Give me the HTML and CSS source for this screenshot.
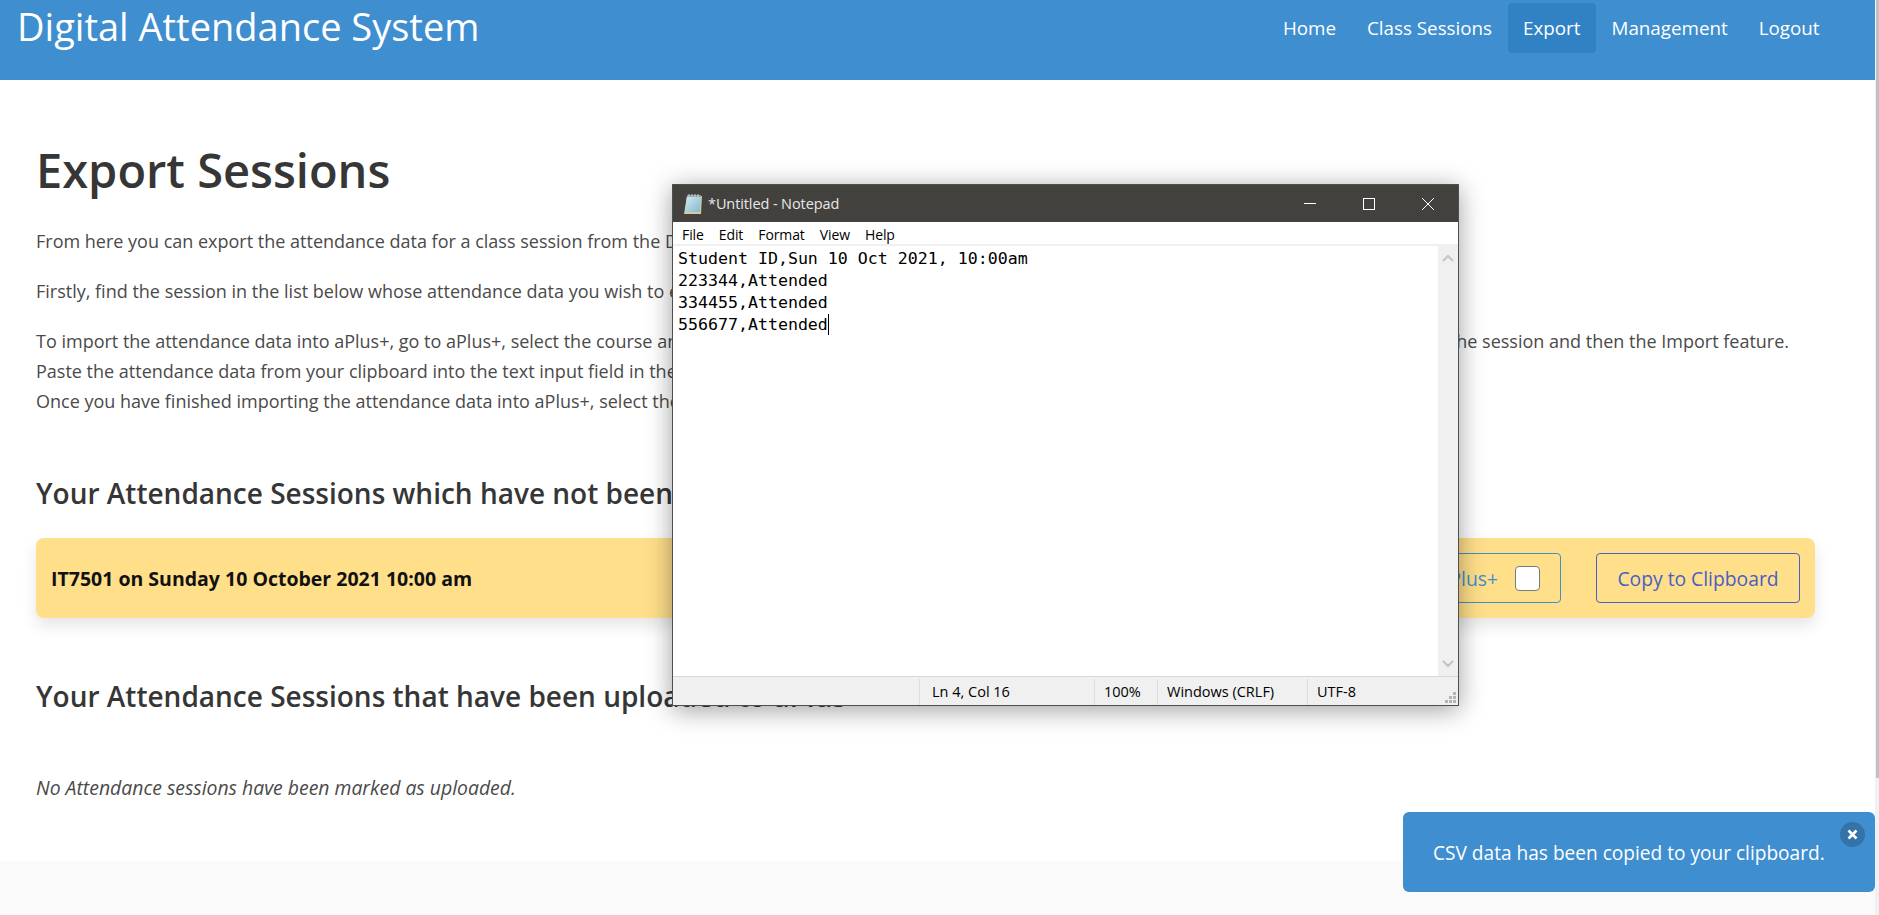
FILE: index.html
```html
<!DOCTYPE html>
<html lang="en">
<head>
<meta charset="utf-8">
<title>Digital Attendance System</title>
<link rel="stylesheet" href="styles.css">
</head>
<body>
<div class="page">
  <nav class="navbar">
    <a class="brand">Digital Attendance System</a>
    <div class="menu">
      <a class="item">Home</a>
      <a class="item">Class Sessions</a>
      <a class="item active">Export</a>
      <a class="item">Management</a>
      <a class="item">Logout</a>
    </div>
  </nav>
  <main class="main">
    <h1 class="title">Export Sessions</h1>
    <p class="para">From here you can export the attendance data for a class session from the Digital Attendance System in a format that can be imported into aPlus+.</p>
    <p class="para">Firstly, find the session in the list below whose attendance data you wish to export and select the Copy to Clipboard button.</p>
    <p class="para">To import the attendance data into aPlus+, go to aPlus+, select the course and open the Attendance tab, select the class session in the list on that page, and then choose the session and then the Import feature.<br>Paste the attendance data from your clipboard into the text input field in the Import feature, and then follow the instructions shown there.<br>Once you have finished importing the attendance data into aPlus+, select the Mark as Uploaded checkbox for the session in the list below.</p>
    <h2 class="subtitle first">Your Attendance Sessions which have not been uploaded to aPlus+</h2>
    <div class="session">
      <span class="session-name">IT7501 on Sunday 10 October 2021 10:00 am</span>
      <div class="actions">
        <label class="btn btn-info">Marked as uploaded to aPlus+ <span class="check"></span></label>
        <button class="btn btn-link">Copy to Clipboard</button>
      </div>
    </div>
    <h2 class="subtitle second">Your Attendance Sessions that have been uploaded to aPlus+</h2>
    <p class="none">No Attendance sessions have been marked as uploaded.</p>
  </main>
  <footer class="footer"></footer>
</div>
<div class="scrollbar"><div class="thumb"></div></div>

<section class="notepad">
  <header class="np-title">
    <svg class="np-icon" viewBox="0 0 20 22" width="20" height="22">
      <defs>
        <linearGradient id="paper" x1="0" y1="0" x2="1" y2="1">
          <stop offset="0" stop-color="#d4ecf2"/>
          <stop offset="1" stop-color="#7fb9cc"/>
        </linearGradient>
      </defs>
      <path d="M4 3h15l-1 18H1z" fill="#d8c9a4"/>
      <path d="M4 3h14l-1 16H2z" fill="url(#paper)"/>
      <path d="M4 2h14v2H4z" fill="#8a9a9f"/>
      <path d="M6 1v3M9 1v3M12 1v3M15 1v3" stroke="#d5d5d5" stroke-width="1"/>
    </svg>
    <span class="np-name">*Untitled - Notepad</span>
    <div class="np-controls">
      <svg class="np-ctl" width="12" height="12" viewBox="0 0 12 12"><path d="M0 5.500h12" stroke="#fff" fill="none"/></svg>
      <svg class="np-ctl" width="12" height="12" viewBox="0 0 12 12"><rect x=".5" y=".5" width="11" height="11" stroke="#fff" fill="none"/></svg>
      <svg class="np-ctl" width="12" height="12" viewBox="0 0 12 12"><path d="M0 0l12 12M12 0L0 12" stroke="#fff" fill="none"/></svg>
    </div>
  </header>
  <div class="np-menu"><span>File</span><span>Edit</span><span>Format</span><span>View</span><span>Help</span></div>
  <div class="np-body">
    <pre class="np-text">Student ID,Sun 10 Oct 2021, 10:00am
223344,Attended
334455,Attended
556677,Attended<span class="caret"></span></pre>
    <div class="np-scroll">
      <svg width="12" height="8" viewBox="0 0 12 8"><path d="M1 7l5-5 5 5" stroke="#c4c4c4" stroke-width="2" fill="none"/></svg>
      <svg width="12" height="8" viewBox="0 0 12 8"><path d="M1 1l5 5 5-5" stroke="#c4c4c4" stroke-width="2" fill="none"/></svg>
    </div>
  </div>
  <div class="np-status">
    <span class="cell c0"></span>
    <span class="cell c1">Ln 4, Col 16</span>
    <span class="cell c2">100%</span>
    <span class="cell c3">Windows (CRLF)</span>
    <span class="cell c4">UTF-8</span>
    <svg class="grip" width="12" height="12" viewBox="0 0 12 12"><path d="M8 0h3v3H8zM4 4h3v3H4zM8 4h3v3H8zM0 8h3v3H0zM4 8h3v3H4zM8 8h3v3H8z" fill="#b4b4b4"/></svg>
  </div>
</section>

<aside class="toast">
  <span>CSV data has been copied to your clipboard.</span>
  <button class="delete" aria-label="close"><svg width="11" height="11" viewBox="0 0 11 11"><path d="M1.5 1.5l8 8M9.500 1.500l-8 8" stroke="#fff" stroke-width="2.600"/></svg></button>
</aside>
</body>
</html>
```
FILE: styles.css
```css
* { box-sizing: border-box; }
html, body { margin: 0; height: 100%; overflow: hidden; }
body {
  display: flex;
  background: #fff;
  font-family: "Open Sans", "Noto Sans", sans-serif;
  font-size: 18px;
  color: #4a4a4a;
}
.page { flex: 1; min-width: 0; display: flex; flex-direction: column; height: 915px; overflow: hidden; }
.scrollbar { width: 4px; background: #f1f1f1; }
.thumb { width: 3px; margin-left: 1px; height: 778px; background: #c1c1c1; }

.navbar { height: 80px; flex: none; background: #3e8ed0; display: flex; justify-content: space-between; align-items: flex-start; padding: 3px 40px 0 17px; color: #fff; }
.brand { font-size: 38px; line-height: 50px; margin-top: -2px; }
.menu { display: flex; }
.item { font-size: 18.800px; line-height: 51px; height: 50px; padding: 0 15.500px; border-radius: 4px; }
.item.active { background: #3082c5; }

.main { flex: 1; padding: 62px 60px 0 36px; }
.title { margin: 0 0 28px; font-size: 47px; line-height: 56px; font-weight: 600; color: #363636; }
.para { margin: 0 0 20px; line-height: 30px; white-space: nowrap; }
.subtitle { margin: 0; font-size: 28px; line-height: 36px; font-weight: 600; color: #363636; white-space: nowrap; }
.subtitle.first { margin-top: 59px; }
.subtitle.second { margin-top: 60px; }
.session { margin-top: 27px; height: 80px; background: #ffdf8a; border-radius: 8px; box-shadow: 0 8px 16px rgba(10,10,10,.1); display: flex; align-items: center; justify-content: space-between; padding: 0 15px 0 15px; }
.session-name { font-weight: 700; color: #111; font-size: 19.500px; padding-top: 1px; }
.actions { display: flex; gap: 35px; }
.btn { height: 50px; display: inline-flex; align-items: center; justify-content: center; background: transparent; border: 1px solid; border-radius: 4px; font: inherit; font-size: 19.300px; }
.btn-info { color: #3e8ed0; border-color: #3e8ed0; padding: 0 20px; gap: 17px; white-space: nowrap; }
.btn-link { color: #485fc7; border-color: #485fc7; width: 204px; }
.check { width: 25px; height: 25px; background: #fff; border: 1px solid #7a7a7a; border-radius: 4px; display: block; }
.none { margin: 59px 0 0; font-style: italic; font-size: 19.400px; line-height: 30px; white-space: nowrap; }
.footer { height: 54px; flex: none; background: #fafafa; }

.notepad { position: absolute; left: 672px; top: 184px; width: 787px; height: 522px; background: #fff; border: 1px solid #4f4f4f; display: flex; flex-direction: column; box-shadow: 0 4px 24px rgba(0,0,0,.38); font-family: "Open Sans", sans-serif; color: #000; }
.np-title { height: 37px; flex: none; background: #43413e; display: flex; align-items: center; padding-left: 10px; color: #fff; }
.np-icon { flex: none; }
.np-name { margin-left: 5px; font-size: 14.500px; letter-spacing: -.1px; color: #e8e8e8; }
.np-controls { margin-left: auto; display: flex; gap: 1px; padding-right: 1px; }
.np-ctl { margin: 0 23px; }
.np-menu { height: 24px; flex: none; display: flex; gap: 13px; padding: 3px 0 0 8px; align-items: center; font-size: 14px; letter-spacing: -.1px; border-bottom: 2px solid #f0f0f0; }
.np-menu span { padding: 0 1px; }
.np-body { flex: 1; min-height: 0; display: flex; }
.np-text { flex: 1; margin: 0; padding: 2px 0 0 5px; font-family: "DejaVu Sans Mono", "Liberation Mono", monospace; font-size: 16.600px; line-height: 22px; color: #000; }
.caret { display: inline-block; width: 1px; height: 21px; background: #000; vertical-align: -5px; }
.np-scroll { width: 20px; background: #f0f0f0; display: flex; flex-direction: column; justify-content: space-between; align-items: center; padding: 8px 0; }
.np-status { height: 29px; flex: none; background: #f0f0f0; border-top: 1px solid #d7d7d7; display: flex; font-size: 14.500px; position: relative; align-items: stretch; }
.cell { border-left: 1px solid #dcdcdc; display: flex; align-items: center; margin-top: 2px; padding-bottom: 2px; white-space: nowrap; }
.c0 { width: 246px; border-left: 0; }
.c1 { width: 175px; padding-left: 12px; }
.c2 { width: 63px; padding-left: 9px; }
.c3 { width: 150px; padding-left: 9px; }
.c4 { padding-left: 9px; }
.grip { position: absolute; right: 1px; bottom: 1px; }

.toast { position: absolute; left: 1403px; top: 812px; width: 472px; height: 80px; background: #3e8ed0; color: #fff; border-radius: 6px; display: flex; align-items: center; padding: 2px 0 0 30px; font-size: 19.100px; }
.delete { position: absolute; right: 10px; top: 10px; width: 25px; height: 25px; border: 0; padding: 0; border-radius: 50%; background: rgba(10,10,10,.2); display: flex; align-items: center; justify-content: center; }
```
